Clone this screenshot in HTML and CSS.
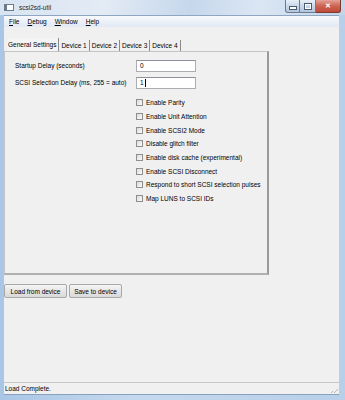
FILE: index.html
```html
<!DOCTYPE html>
<html lang="en">
<head>
    <meta charset="UTF-8">
    <title>scsi2sd-util</title>
    <link rel="stylesheet" href="styles.css">
</head>
<body>
    <div class="window">
        <div class="titlebar">
            <span class="app-icon"></span>
            <span class="title">scsi2sd-util</span>
            <div class="caption-btns">
                <span class="cap-btn min"><i></i></span>
                <span class="cap-btn max"><i></i></span>
                <span class="cap-btn close">&#x2715;</span>
            </div>
        </div>
        <div class="frame">
            <div class="menubar">
                <span><u>F</u>ile</span>
                <span><u>D</u>ebug</span>
                <span><u>W</u>indow</span>
                <span><u>H</u>elp</span>
            </div>
            <div class="client">
                <div class="notebook">
                    <div class="tabs">
                        <span class="tab active">General Settings</span>
                        <span class="tab">Device 1</span>
                        <span class="tab">Device 2</span>
                        <span class="tab">Device 3</span>
                        <span class="tab">Device 4</span>
                    </div>
                    <div class="panel">
                        <div class="field">
                            <label>Startup Delay (seconds)</label>
                            <span class="input">0</span>
                        </div>
                        <div class="field">
                            <label>SCSI Selection Delay (ms, 255 = auto)</label>
                            <span class="input">1<span class="caret"></span></span>
                        </div>
                        <div class="checks">
                            <div class="check"><span class="box"></span>Enable Parity</div>
                            <div class="check"><span class="box"></span>Enable Unit Attention</div>
                            <div class="check"><span class="box"></span>Enable SCSI2 Mode</div>
                            <div class="check"><span class="box"></span>Disable glitch filter</div>
                            <div class="check"><span class="box"></span>Enable disk cache (experimental)</div>
                            <div class="check"><span class="box"></span>Enable SCSI Disconnect</div>
                            <div class="check"><span class="box"></span>Respond to short SCSI selection pulses</div>
                            <div class="check"><span class="box"></span>Map LUNS to SCSI IDs</div>
                        </div>
                    </div>
                </div>
                <div class="actions">
                    <button>Load from device</button>
                    <button>Save to device</button>
                </div>
                <div class="statusbar">
                    <span>Load Complete.</span>
                    <span class="grip"></span>
                </div>
            </div>
        </div>
    </div>
</body>
</html>
```

FILE: styles.css
```css
body {
    margin: 0;
    font-family: 'Liberation Sans', Arial, sans-serif;
    font-size: 6.5px;
    color: #000;
    background: #fff;
}
.window {
    width: 345px;
    height: 400px;
    display: flex;
    flex-direction: column;
    background: linear-gradient(to right, #a9c6e6 0%, #c5d9ee 40%, #b7cfe9 100%);
    box-sizing: border-box;
}
.titlebar {
    height: 15px;
    display: flex;
    align-items: center;
    padding-left: 4px;
    background: linear-gradient(100deg, #d8e4f2 0%, #e3ebf5 30%, #c6d7ec 55%, #dbe6f3 75%, #c3d5ea 100%);
}
.app-icon {
    width: 6px;
    height: 5px;
    background: #fff;
    border: 1px solid #6c7a8a;
    border-left-width: 3px;
    margin-right: 5px;
}
.title {
    font-size: 6.5px;
    color: #1e1e1e;
}
.caption-btns {
    margin-left: auto;
    margin-right: 4px;
    align-self: flex-start;
    display: flex;
    height: 13px;
}
.cap-btn {
    display: flex;
    align-items: center;
    justify-content: center;
    border: 1px solid #6a7c94;
    border-top: none;
    box-sizing: border-box;
    height: 13px;
}
.cap-btn.min {
    width: 15px;
    border-radius: 0 0 0 3px;
    background: linear-gradient(#e8eff8, #c9d8ea 50%, #b3c6dc);
}
.cap-btn.max {
    width: 16px;
    border-left: none;
    background: linear-gradient(#e8eff8, #c9d8ea 50%, #b3c6dc);
}
.cap-btn.min i {
    width: 6px;
    height: 2px;
    margin-top: 4px;
    background: #fff;
    border: 1px solid #4a5a70;
}
.cap-btn.max i {
    width: 4px;
    height: 3px;
    border: 1px solid #fff;
    outline: 1px solid #4a5a70;
}
.cap-btn.close {
    width: 25px;
    border-left: none;
    border-radius: 0 0 3px 0;
    background: linear-gradient(#e4a296, #cd6353 50%, #c04a38);
    color: #fff;
    font-size: 7px;
    font-weight: bold;
    border-color: #7a3a32;
}
.frame {
    flex: 1;
    margin: 0 6px 5px 4px;
    display: flex;
    flex-direction: column;
    border-bottom: 1px solid #8aa1bd;
}
.menubar {
    height: 12px;
    display: flex;
    align-items: center;
    gap: 8px;
    padding-left: 5px;
    background: linear-gradient(#f7f9fc, #e1e9f4);
    border-top: 1px solid #8fa6c2;
    box-sizing: border-box;
}
.client {
    flex: 1;
    background: #f0f0f0;
    display: flex;
    flex-direction: column;
}
.notebook {
    margin-top: 11px;
    width: 265px;
}
.tabs {
    display: flex;
    padding-left: 3px;
    height: 13px;
    align-items: flex-end;
}
.tab {
    height: 11px;
    display: flex;
    align-items: center;
    padding: 0 2px;
    border-right: 1px solid #8a8a8a;
    background: #f0f0f0;
}
.tab.active {
    height: 13px;
    padding: 0 2px 0 1px;
    background: #f4f4f4;
}
.panel {
    height: 224px;
    box-sizing: border-box;
    border: 1px solid #c4c4c4;
    border-right: 2px solid #9a9a9a;
    border-bottom: 2px solid #b0b0b0;
    background: #f0f0f0;
    padding: 7px 0 0 10px;
}
.field {
    display: flex;
    align-items: center;
    height: 13px;
    margin-bottom: 4px;
}
.field label {
    width: 121px;
}
.input {
    width: 60px;
    height: 12px;
    box-sizing: border-box;
    background: #fff;
    border: 1px solid #abadb3;
    border-top-color: #8e9199;
    padding-left: 3px;
    display: flex;
    align-items: center;
}
.caret {
    width: 1px;
    height: 8px;
    background: #000;
    margin-left: 1px;
}
.checks {
    margin-left: 121px;
    padding-top: 3px;
}
.check {
    height: 13.7px;
    display: flex;
    align-items: center;
}
.box {
    width: 7px;
    height: 7px;
    box-sizing: border-box;
    border: 1px solid #8e8f8f;
    background: linear-gradient(135deg, #dcdcdc, #fafafa);
    margin-right: 3px;
}
.actions {
    display: flex;
    gap: 2px;
    margin-top: 9px;
}
button {
    font: inherit;
    height: 14px;
    padding: 0 4px;
    background: linear-gradient(#f6f6f6, #e6e6e6 50%, #dadada);
    border: 1px solid #a8a8a8;
    border-radius: 2px;
    color: #000;
}
.actions button:first-child {
    width: 63px;
}
.actions button:last-child {
    width: 53px;
}
.statusbar {
    margin-top: auto;
    height: 11px;
    border-top: 1px solid #c8c8c8;
    display: flex;
    align-items: center;
    padding-left: 1px;
    position: relative;
}
.grip {
    position: absolute;
    right: 1px;
    bottom: 1px;
    width: 7px;
    height: 7px;
    background: linear-gradient(135deg, transparent 50%, #b8b8b8 50%, #b8b8b8 57%, transparent 57%, transparent 70%, #b8b8b8 70%, #b8b8b8 77%, transparent 77%);
}
```
